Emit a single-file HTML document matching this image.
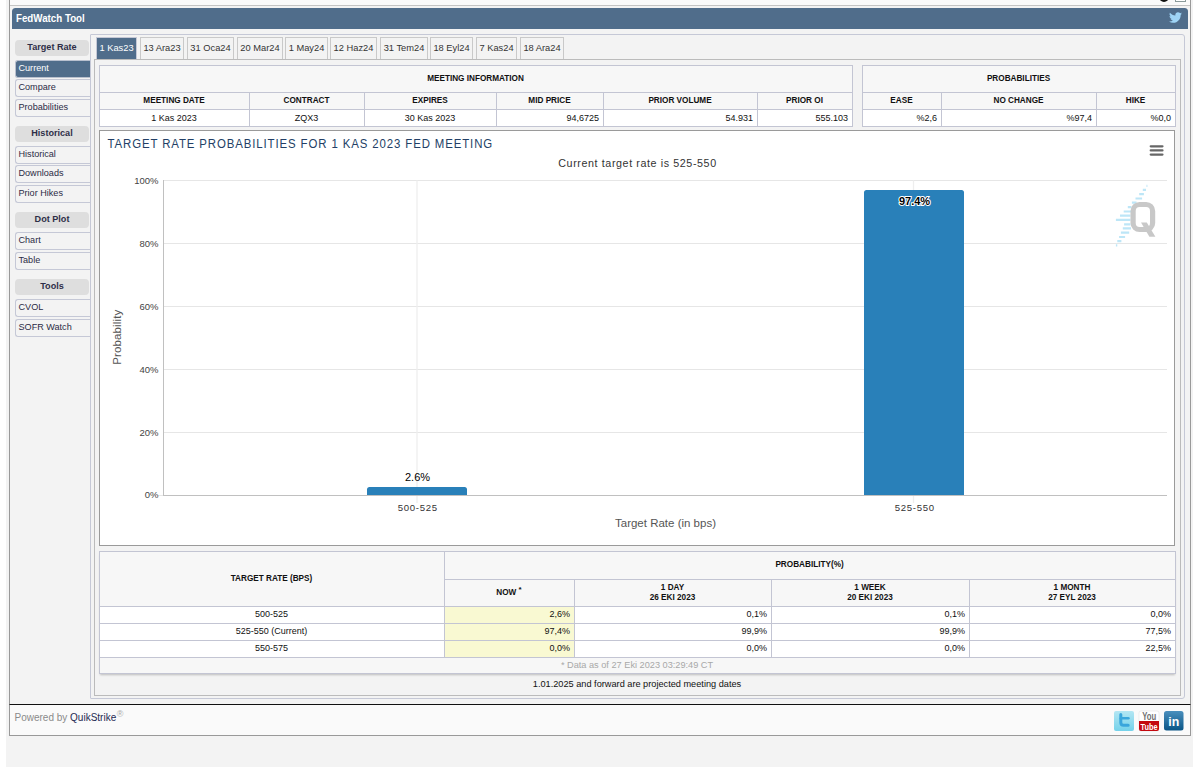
<!DOCTYPE html>
<html><head><meta charset="utf-8">
<style>
*{box-sizing:border-box;margin:0;padding:0}
html,body{width:1201px;height:767px;overflow:hidden;background:#fff;font-family:"Liberation Sans",sans-serif;color:#222}
.a{position:absolute}
#strip{left:6px;top:0;width:1187px;height:767px;background:#f3f3f3}
#frame{left:9px;top:0;width:1182px;height:736px;border-left:1px solid #999;border-right:1px solid #999;border-bottom:1px solid #999;background:#f3f3f3}
#topbar{left:10px;top:0;width:1180px;height:6px;background:#fafafa;border-bottom:1px solid #c4c4c4}
#hdr{left:12px;top:8px;width:1176px;height:21px;background:#506d8b;border-radius:3.5px 3.5px 0 0}
#hdr span{position:absolute;left:4px;top:4.2px;font-weight:bold;font-size:10.6px;color:#fff;transform:scaleX(0.92);transform-origin:0 0;white-space:nowrap}
.sh{position:absolute;left:15px;width:74px;height:16px;background:#dedede;border-radius:4px;font-weight:bold;font-size:9.1px;color:#2e2e48;text-align:center;line-height:14px}
.si{position:absolute;left:15px;width:76px;height:18px;border:1px solid #c5c8d6;border-right:none;border-radius:3px 0 0 3px;font-size:9.1px;color:#2b2b45;line-height:14px;padding-left:2.5px;background:#f3f3f3}
.si.on{background:#506d8b;color:#fff;border-color:#b9c0cf}
#tabpanel{left:90px;top:34px;width:1095px;height:665px;border:1px solid #c5c8d6;border-radius:1px 3px 3px 1px}
.tab{position:absolute;top:37px;height:22px;border:1px solid #c9c9c9;border-bottom:none;background:#f3f3f3;font-size:9.3px;color:#333;text-align:center;line-height:20px}
.tab.on{background:#506d8b;color:#fff;border-color:#c5c8d6;top:37px;height:22px;line-height:20px}
#content{left:94px;top:59px;width:1087px;height:637px;border:1px solid #bbb;background:#f3f3f3}
table{border-collapse:collapse;position:absolute;table-layout:fixed}
td{border:1px solid #c3c5d3;color:#111;font-size:9px;padding:0 4px 0 3px;white-space:nowrap;overflow:hidden}
.th td{background:#f7f7f7;font-weight:bold;font-size:8.2px;text-align:center;color:#111;padding-bottom:2px}
.dr td{background:#fff;text-align:right}
.dr2 td{padding-bottom:2px}
#chart{left:99px;top:130px;width:1076px;height:416px;border:1px solid #9a9a9a;background:#fff}
.g{position:absolute;background:#e6e6e6}
.yl{position:absolute;font-size:9.5px;color:#444;text-align:right;width:40px}
#footer{left:9px;top:704px;width:1182px;height:32px;border:1px solid #999;border-top:1px solid #111;background:#fafafa}
</style></head><body>
<div id="strip" class="a"></div>
<div id="frame" class="a"></div>
<div id="topbar" class="a"></div>
<div class="a" style="left:1159px;top:-8px;width:10px;height:10px;border:2.2px solid #111;border-radius:50%;background:#999"></div>
<div class="a" style="left:1175px;top:-5px;width:11px;height:7px;border:1px solid #8a9a9a;background:#fff"></div>

<div id="hdr" class="a"><span>FedWatch Tool</span>
<svg class="a" style="left:1157px;top:3.8px" width="13" height="11.2" viewBox="0 0 24 20"><path fill="#9fd4f5" d="M24 2.4c-.9.4-1.8.6-2.8.8 1-.6 1.8-1.6 2.2-2.7-1 .6-2 1-3.1 1.2C19.3.7 18 0 16.6 0c-2.7 0-4.9 2.2-4.9 4.9 0 .4 0 .8.1 1.1C7.7 5.8 4.1 3.9 1.7.9c-.4.7-.7 1.6-.7 2.5 0 1.7.9 3.2 2.2 4.1-.8 0-1.6-.2-2.2-.6v.1c0 2.4 1.7 4.4 3.9 4.8-.4.1-.8.2-1.3.2-.3 0-.6 0-.9-.1.6 2 2.4 3.4 4.6 3.4-1.7 1.3-3.8 2.1-6.1 2.1-.4 0-.8 0-1.2-.1 2.2 1.4 4.8 2.2 7.5 2.2 9.1 0 14-7.5 14-14v-.6c1-.7 1.8-1.6 2.5-2.5z"/></svg>
</div>

<div class="sh" style="top:40px">Target Rate</div>
<div class="si on" style="top:60px;height:17.6px">Current</div>
<div class="si" style="top:79px">Compare</div>
<div class="si" style="top:99px">Probabilities</div>
<div class="sh" style="top:126px">Historical</div>
<div class="si" style="top:146px">Historical</div>
<div class="si" style="top:165px">Downloads</div>
<div class="si" style="top:185px">Prior Hikes</div>
<div class="sh" style="top:212px">Dot Plot</div>
<div class="si" style="top:232px">Chart</div>
<div class="si" style="top:252px">Table</div>
<div class="sh" style="top:279px">Tools</div>
<div class="si" style="top:299px">CVOL</div>
<div class="si" style="top:318.5px">SOFR Watch</div>

<div id="tabpanel" class="a"></div>
<div id="content" class="a"></div>
<div class="tab on" style="left:96px;width:41px">1 Kas23</div>
<div class="tab" style="left:140px;width:44px">13 Ara23</div>
<div class="tab" style="left:187px;width:47px">31 Oca24</div>
<div class="tab" style="left:237px;width:46px">20 Mar24</div>
<div class="tab" style="left:285px;width:43px">1 May24</div>
<div class="tab" style="left:330px;width:47px">12 Haz24</div>
<div class="tab" style="left:380px;width:48px">31 Tem24</div>
<div class="tab" style="left:430px;width:43px">18 Eyl24</div>
<div class="tab" style="left:476px;width:41px">7 Kas24</div>
<div class="tab" style="left:520px;width:44px">18 Ara24</div>

<table style="left:99px;top:65px;width:753px">
<colgroup><col style="width:150px"><col style="width:115px"><col style="width:132px"><col style="width:107px"><col style="width:154px"><col style="width:95px"></colgroup>
<tr class="th" style="height:27px"><td colspan="6">MEETING INFORMATION</td></tr>
<tr class="th" style="height:17px"><td>MEETING DATE</td><td>CONTRACT</td><td>EXPIRES</td><td>MID PRICE</td><td>PRIOR VOLUME</td><td>PRIOR OI</td></tr>
<tr class="dr" style="height:17px"><td style="text-align:center">1 Kas 2023</td><td style="text-align:center">ZQX3</td><td style="text-align:center">30 Kas 2023</td><td>94,6725</td><td>54.931</td><td>555.103</td></tr>
</table>

<table style="left:862px;top:65px;width:313px">
<colgroup><col style="width:79px"><col style="width:155px"><col style="width:79px"></colgroup>
<tr class="th" style="height:27px"><td colspan="3">PROBABILITIES</td></tr>
<tr class="th" style="height:17px"><td>EASE</td><td>NO CHANGE</td><td>HIKE</td></tr>
<tr class="dr" style="height:17px"><td>%2,6</td><td>%97,4</td><td>%0,0</td></tr>
</table>

<div id="chart" class="a">
</div>
<svg class="a" style="left:0;top:0" width="1201" height="767" viewBox="0 0 1201 767" font-family="Liberation Sans">
<g stroke="#e6e6e6" stroke-width="1" shape-rendering="crispEdges">
<line x1="163" y1="180.5" x2="1167" y2="180.5"/>
<line x1="163" y1="243.5" x2="1167" y2="243.5"/>
<line x1="163" y1="306.5" x2="1167" y2="306.5"/>
<line x1="163" y1="369.5" x2="1167" y2="369.5"/>
<line x1="163" y1="432.5" x2="1167" y2="432.5"/>
<line x1="158" y1="495.5" x2="163" y2="495.5"/>
</g><g stroke="#eeeeee" stroke-width="1.3"><line x1="417" y1="180.5" x2="417" y2="503"/>
<line x1="913.5" y1="180.5" x2="913.5" y2="503"/>
</g>
<path d="M367 495V489.5Q367 487 369.5 487H464.5Q467 487 467 489.5V495Z" fill="#2980b9"/>
<path d="M864 495V192.5Q864 190 866.5 190H961.5Q964 190 964 192.5V495Z" fill="#2980b9"/>
<g stroke="#c0c0c0" stroke-width="1" shape-rendering="crispEdges">
<line x1="163.5" y1="180" x2="163.5" y2="496"/>
<line x1="163" y1="495.5" x2="1167" y2="495.5"/>
</g>
<text transform="translate(107.5 147.5) scale(0.88 1)" x="0" y="0" font-size="13" letter-spacing="1" fill="#233f66">TARGET RATE PROBABILITIES FOR 1 KAS 2023 FED MEETING</text>
<text transform="translate(637.5 167) scale(0.95 1)" font-size="11.3" letter-spacing="0.62" fill="#333" text-anchor="middle">Current target rate is 525-550</text>
<g font-size="9.5" fill="#444" text-anchor="end">
<text x="158.5" y="184">100%</text>
<text x="158.5" y="247">80%</text>
<text x="158.5" y="310">60%</text>
<text x="158.5" y="373">40%</text>
<text x="158.5" y="436">20%</text>
<text x="158.5" y="498">0%</text>
</g>
<text transform="translate(121 337.2) rotate(-90)" font-size="11.5" letter-spacing="0.15" fill="#555" text-anchor="middle">Probability</text>
<g font-size="9.6" fill="#333" text-anchor="middle" letter-spacing="0.7">
<text x="417.8" y="510.8">500-525</text>
<text x="914.8" y="510.8">525-550</text>
</g>
<text x="665.5" y="526.5" font-size="11.5" fill="#555" text-anchor="middle">Target Rate (in bps)</text>
<text x="417.5" y="481" font-size="11" fill="#000" text-anchor="middle">2.6%</text>
<text x="914.5" y="204.8" font-size="11" font-weight="bold" fill="#000" stroke="#fff" stroke-width="2" paint-order="stroke" text-anchor="middle">97.4%</text>
<g fill="#666"><rect x="1149.6" y="145.2" width="14" height="2.3" rx="1.15"/><rect x="1149.6" y="149.3" width="14" height="2.3" rx="1.15"/><rect x="1149.6" y="153.4" width="14" height="2.3" rx="1.15"/></g>
</svg>
<svg class="a" style="left:0;top:0" width="1201" height="767" viewBox="0 0 1201 767">
<path d="M1146.5 185.9H1147.4M1142.8 189.9H1146.0M1139.2 194.1H1143.9M1135.5 198.5H1142.1M1131.9 202.6H1136.5M1127.8 207.1H1131.4M1123.7 211.5H1131.0M1120.0 215.6H1130.5M1115.9 219.9H1130.5M1124.1 224.3H1130.5M1122.8 228.4H1131.0M1120.9 232.6H1129.2M1119.1 237.0H1125.1M1117.3 241.1H1121.4M1115.9 245.4H1117.3" stroke="#bde6f7" stroke-width="2.2" fill="none" stroke-linecap="butt"/>
<rect x="1133.1" y="204.5" width="19.5" height="25" rx="6.5" fill="none" stroke="#c8c8c8" stroke-width="5.2"/>
<path d="M1141 222.4H1146.8L1155.4 236.8H1149.4Z" fill="#c8c8c8"/>
</svg>

<table style="left:99px;top:551px;width:1076px;box-shadow:0 2px 2px -1px rgba(0,0,0,0.22)">
<colgroup><col style="width:345px"><col style="width:130px"><col style="width:197px"><col style="width:198px"><col style="width:206px"></colgroup>
<tr class="th" style="height:28px"><td rowspan="2">TARGET RATE (BPS)</td><td colspan="4">PROBABILITY(%)</td></tr>
<tr class="th" style="height:27px;line-height:9.6px"><td style="padding-bottom:0px">NOW <span style="position:relative;top:-3px;font-size:8px">*</span></td><td style="padding-bottom:1px">1 DAY<br>26 EKI 2023</td><td style="padding-bottom:1px">1 WEEK<br>20 EKI 2023</td><td style="padding-bottom:1px">1 MONTH<br>27 EYL 2023</td></tr>
<tr class="dr dr2" style="height:17px"><td style="text-align:center">500-525</td><td style="background:#f9f9d2">2,6%</td><td>0,1%</td><td>0,1%</td><td>0,0%</td></tr>
<tr class="dr dr2" style="height:17px"><td style="text-align:center">525-550 (Current)</td><td style="background:#f9f9d2">97,4%</td><td>99,9%</td><td>99,9%</td><td>77,5%</td></tr>
<tr class="dr dr2" style="height:17px"><td style="text-align:center">550-575</td><td style="background:#f9f9d2">0,0%</td><td>0,0%</td><td>0,0%</td><td>22,5%</td></tr>
<tr style="height:16px"><td colspan="5" style="background:#f7f7f7;text-align:center;color:#a8a8a8;font-size:9.2px;line-height:12px;vertical-align:top;padding-top:1px">* Data as of 27 Eki 2023 03:29:49 CT</td></tr>
</table>
<div class="a" style="left:99px;top:679px;width:1076px;text-align:center;font-size:9.2px;color:#111">1.01.2025 and forward are projected meeting dates</div>

<div id="footer" class="a"><span class="a" style="left:4.5px;top:6.5px;font-size:10px;color:#8a8a8a;white-space:nowrap">Powered by <span style="color:#1f2a52">QuikStrike</span><span style="font-size:9px;color:#aaa;position:relative;top:-3.5px;left:0.5px">®</span></span></div>
<svg class="a" style="left:1113px;top:710px" width="72" height="22" viewBox="1113 710 72 22">
<defs>
<linearGradient id="tw" x1="0" y1="0" x2="0" y2="1"><stop offset="0" stop-color="#b3e6f3"/><stop offset="1" stop-color="#74d2ea"/></linearGradient>
<linearGradient id="li" x1="0" y1="0" x2="0" y2="1"><stop offset="0" stop-color="#4a8fbd"/><stop offset="1" stop-color="#0a5586"/></linearGradient>
</defs>
<rect x="1114" y="711" width="20" height="20" rx="2" fill="url(#tw)"/>
<path d="M1120.8 714.6V722.6Q1120.8 725.3 1123.5 725.3H1128.2" fill="none" stroke="#3aa6dc" stroke-width="3" stroke-linecap="round"/>
<path d="M1121 718.2H1128.4" fill="none" stroke="#3aa6dc" stroke-width="2.6" stroke-linecap="round"/>
<rect x="1139" y="711" width="20" height="20" rx="2" fill="#fff" stroke="#ddd" stroke-width="0.5"/>
<path d="M1139 721H1159V729Q1159 731 1157 731H1141Q1139 731 1139 729Z" fill="#c4080f"/>
<text x="1149.2" y="719.8" font-family="Liberation Sans" font-weight="bold" font-size="10.5" fill="#707070" text-anchor="middle" textLength="14" lengthAdjust="spacingAndGlyphs">You</text>
<text x="1149" y="729.8" font-family="Liberation Sans" font-weight="bold" font-size="9.5" fill="#fff" text-anchor="middle" textLength="17" lengthAdjust="spacingAndGlyphs">Tube</text>
<rect x="1164" y="711" width="19.5" height="19.5" rx="2.5" fill="url(#li)"/>
<text x="1173.8" y="725.6" font-family="Liberation Sans" font-weight="bold" font-size="13" fill="#fff" text-anchor="middle" textLength="11" lengthAdjust="spacingAndGlyphs">in</text>
</svg>
</body></html>
